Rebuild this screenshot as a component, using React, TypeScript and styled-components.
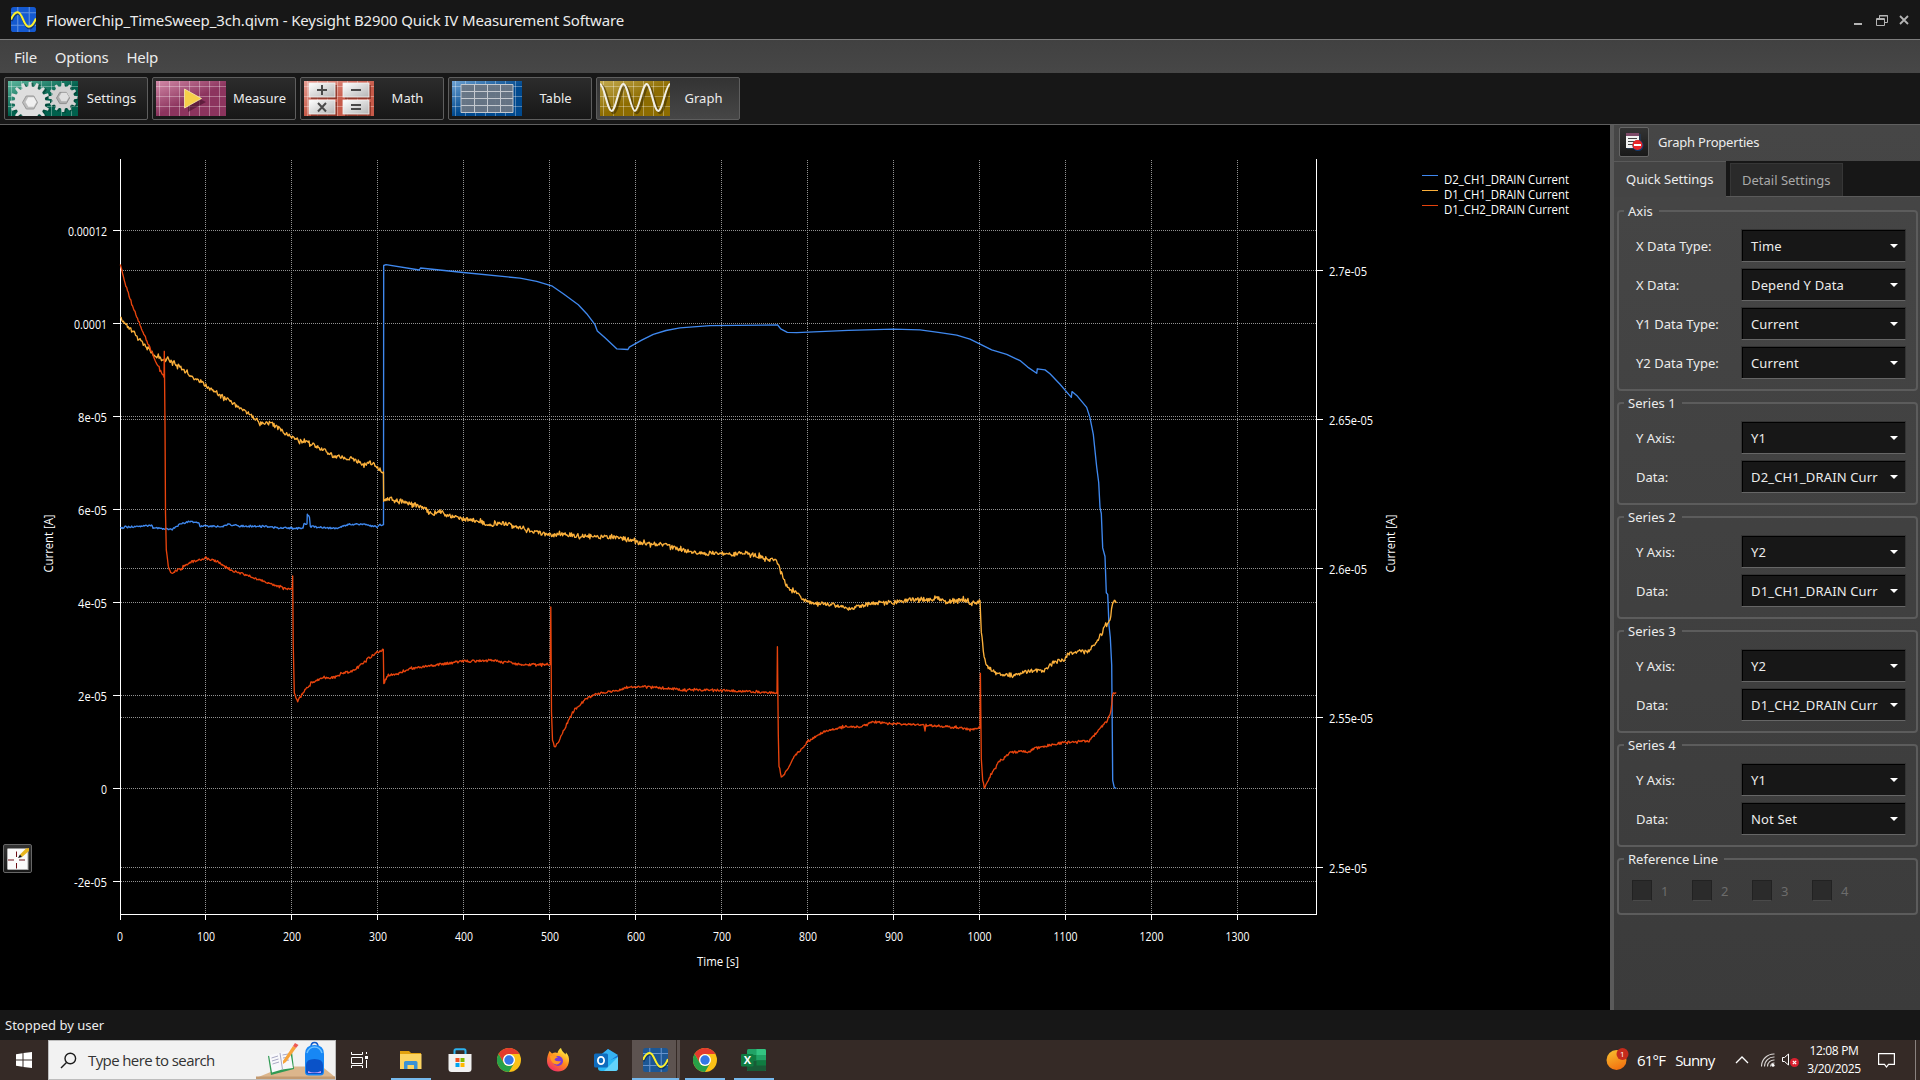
import React from 'react';
import styled, { createGlobalStyle } from 'styled-components';

const TAHOMA = `"Noto Sans", "DejaVu Sans", sans-serif`;
const SEGOE = `"Open Sans", "Noto Sans", sans-serif`;

const GlobalStyle = createGlobalStyle`
  body { margin: 0; background: #000; overflow: hidden; }
  * { box-sizing: border-box; }
`;

const Screen = styled.div`
  width: 1920px;
  height: 1080px;
  display: flex;
  flex-direction: column;
  background: #171717;
  color: #ececec;
  font: 13px ${TAHOMA};
  white-space: nowrap;
`;

/* ---------- window chrome ---------- */

const TitleBar = styled.header`
  height: 40px;
  flex: none;
  display: flex;
  align-items: center;
  padding: 0 8px 0 11px;
  border-bottom: 1px solid #7d7d7d;
`;

const TitleText = styled.div`
  margin-left: 10px;
  flex: 1;
  font-size: 15px;
  letter-spacing: -0.13px;
  padding-top: 1px;
`;

const MenuBar = styled.nav`
  height: 33px;
  flex: none;
  display: flex;
  align-items: center;
  gap: 18px;
  padding: 0 14px;
  background: linear-gradient(#414141, #474747);
  font-size: 15px;
  letter-spacing: -0.3px;
`;

const ToolBar = styled.div`
  height: 52px;
  flex: none;
  display: flex;
  gap: 4px;
  padding: 4px;
  border-bottom: 1px solid #5f5f5f;
`;

const ToolButton = styled.div<{ $active?: boolean }>`
  width: 144px;
  height: 43px;
  display: flex;
  align-items: center;
  padding-left: 3px;
  border: 1px solid #5e5e5e;
  border-radius: 2px;
  background: ${(p) => (p.$active ? 'linear-gradient(#333, #464646)' : 'linear-gradient(#2c2c2c, #171717)')};
  svg { display: block; flex: none; }
  span { flex: 1; text-align: center; padding: 0 2px 1px 0; }
`;

const Workspace = styled.main`
  flex: 1;
  min-height: 0;
  display: flex;
`;

const ChartArea = styled.section`
  position: relative;
  width: 1610px;
  flex: none;
  background: #000;
  svg { display: block; }
`;

const IconButton = styled.div`
  width: 30px;
  height: 30px;
  display: grid;
  place-items: center;
  border: 1px solid #666;
  border-radius: 2px;
  background: linear-gradient(#333, #191919);
`;

const CursorButton = styled(IconButton)`
  position: absolute;
  left: 3px;
  top: 719px;
  width: 29px;
  height: 29px;
`;

const StatusBar = styled.footer`
  height: 30px;
  flex: none;
  padding: 6px 5px 0;
  line-height: 18px;
`;

/* ---------- properties panel ---------- */

const Panel = styled.aside`
  flex: 1;
  border-left: 4px solid #5a5a5a;
  background: linear-gradient(#464646, #3b3b3b);
`;

const PanelHeader = styled.div`
  height: 36px;
  display: flex;
  align-items: center;
  gap: 9px;
  padding: 0 4px 2px 5px;
  letter-spacing: -0.2px;
  span { padding-bottom: 1px; }
`;

const Tabs = styled.div`
  height: 36px;
  display: flex;
  background: linear-gradient(#5a5a5a, #5a5a5a) bottom / 100% 1px no-repeat #171717;
`;

const ActiveTab = styled.div`
  width: 112px;
  padding: 8px 0 0 12px;
  border-top: 1px solid #5a5a5a;
  background: #444;
  line-height: 18px;
`;

const IdleTab = styled.div`
  width: 113px;
  height: 33px;
  margin: 2px 0 0 4px;
  padding: 7px 0 0 11px;
  border: 1px solid #363636;
  border-bottom: 0;
  background: #2a2a2a;
  color: #a9a9a9;
  line-height: 18px;
`;

const Groups = styled.div`
  display: flex;
  flex-direction: column;
  gap: 3px;
  padding: 5px 2px 0 3px;
`;

const Group = styled.fieldset<{ $check?: boolean }>`
  margin: 0;
  min-width: 0;
  padding: ${(p) => (p.$check ? '13px 14px 13px' : '9px 10px 10px 17px')};
  border: 2px solid #5c5c5c;
  border-radius: 4px;
  display: flex;
  flex-direction: ${(p) => (p.$check ? 'row' : 'column')};
  gap: 6px;
`;

const GroupTitle = styled.legend<{ $shift: number }>`
  margin-left: ${(p) => p.$shift}px;
  padding: 0 6px 0 4px;
  height: 18px;
  line-height: 18px;
`;

const Field = styled.div`
  height: 33px;
  display: flex;
  align-items: center;
  justify-content: space-between;
`;

const Combo = styled.div`
  width: 165px;
  height: 33px;
  display: flex;
  align-items: center;
  justify-content: space-between;
  padding: 0 7px 0 9px;
  border: 1px solid #333;
  border-bottom-color: #666;
  box-shadow: inset 1px 1px 0 #000;
  background: #171717;
  letter-spacing: 0.15px;
`;

const Check = styled.div`
  width: 54px;
  height: 19px;
  display: flex;
  align-items: center;
  gap: 9px;
  color: #6c6c6c;
  position: relative;
  left: -1px;
  &::before {
    content: '';
    width: 18px;
    height: 19px;
    background: #2b2b2b;
    border: 1px solid #222;
    border-bottom-color: #4a4a4a;
  }
`;

/* ---------- taskbar ---------- */

const TaskBar = styled.div`
  height: 40px;
  flex: none;
  display: flex;
  background: #352a26;
  color: #fff;
  font-family: ${SEGOE};
`;

const StartCell = styled.div`
  width: 48px;
  display: grid;
  place-items: center;
`;

const SearchBox = styled.div`
  width: 288px;
  display: flex;
  align-items: center;
  padding-left: 11px;
  background: #f2f2f2;
  border: 1px solid #bdbdbd;
  color: #333;
  font-size: 15px;
  letter-spacing: -0.6px;
  span { flex: 1; margin-left: 11px; }
`;

const TaskCell = styled.div<{ $open?: boolean; $active?: boolean; $first?: boolean }>`
  width: ${(p) => (p.$first ? 50 : 49)}px;
  padding-right: ${(p) => (p.$first ? 3 : 0)}px;
  display: flex;
  align-items: center;
  justify-content: center;
  background:
    ${(p) => (p.$open ? `linear-gradient(#76b9ed, #76b9ed) center bottom / ${p.$active ? 47 : 40}px 2px no-repeat,` : '')}
    ${(p) => (p.$active ? 'linear-gradient(90deg, #352a26 1px, transparent 1px, transparent 45px, #352a26 45px, #352a26 46px, transparent 46px), #5d5350' : 'transparent')};
`;

const Tray = styled.div`
  margin-left: auto;
  display: flex;
  align-items: center;
  height: 40px;
`;

const Weather = styled.div`
  width: 86px;
  margin-left: 7px;
  display: flex;
  gap: 10px;
  font-size: 15px;
  letter-spacing: -0.8px;
  padding-bottom: 1px;
`;

const Clock = styled.div`
  width: 64px;
  text-align: center;
  font-size: 12px;
  line-height: 18px;
  letter-spacing: -0.35px;
`;

const Spacer = styled.i<{ $w: number }>`
  width: ${(p) => p.$w}px;
  flex: none;
`;

const ShowDesktop = styled.i`
  width: 5px;
  height: 40px;
  border-left: 1px solid #8a827f;
`;

/* ---------- toolbar artwork ---------- */

const gear = (cx: number, cy: number, r: number, teeth: number) => {
  const pts: string[] = [];
  for (let i = 0; i < teeth; i++) {
    const step = (Math.PI * 2) / teeth;
    [[-0.5, 0.76], [-0.3, 0.78], [-0.16, 1], [0.16, 1], [0.3, 0.78]].forEach(([o, k]) => {
      const a = (i + o) * step;
      pts.push(`${(cx + Math.cos(a) * r * k).toFixed(1)},${(cy + Math.sin(a) * r * k).toFixed(1)}`);
    });
  }
  return pts.join(' ');
};

const hex = (cx: number, cy: number, r: number) =>
  Array.from({ length: 6 }, (_, i) => {
    const a = (i * Math.PI) / 3;
    return `${(cx + Math.cos(a) * r).toFixed(1)},${(cy + Math.sin(a) * r).toFixed(1)}`;
  }).join(' ');

const Tile = ({ id, from, to, children }: { id: string; from: string; to: string; children: React.ReactNode }) => (
  <svg width="70" height="35" viewBox="0 0 70 35">
    <defs>
      <linearGradient id={id} x1="0" y1="0" x2="0.7" y2="0.8">
        <stop offset="0" stopColor={from} />
        <stop offset="0.7" stopColor={to} />
      </linearGradient>
      <linearGradient id={id + 'm'} x1="0" y1="0" x2="1" y2="1">
        <stop offset="0" stopColor="#fff" />
        <stop offset="1" stopColor="#b5b5b5" />
      </linearGradient>
    </defs>
    <rect width="70" height="35" fill={`url(#${id})`} />
    <path
      d="M3.5 0V35M13.5 0V35M23.5 0V35M33.5 0V35M43.5 0V35M53.5 0V35M63.5 0V35M0 5.5H70M0 15.5H70M0 25.5H70"
      stroke="#fff"
      strokeOpacity="0.32"
      fill="none"
    />
    {children}
  </svg>
);

const SettingsArt = () => (
  <Tile id="ts" from="#5fb89f" to="#00604c">
    <polygon points={gear(24, 22, 20, 16)} fill="#003b2e" opacity="0.6" />
    <polygon points={gear(56.5, 18, 14, 12)} fill="#003b2e" opacity="0.6" />
    <polygon points={gear(22, 21, 20, 16)} fill="#dedede" />
    <polygon points={gear(55, 16.5, 14.5, 12)} fill="#d2d2d2" />
    <polygon points={hex(22, 21.5, 7.5)} fill="#bdbdbd" stroke="#999" />
    <polygon points={hex(23, 21, 5.5)} fill="#f0f0f0" />
    <polygon points={hex(55, 17, 6.5)} fill="#aeaeae" stroke="#909090" />
    <polygon points={hex(56, 16, 5)} fill="#e0e0e0" />
  </Tile>
);

const MeasureArt = () => (
  <Tile id="tm" from="#d38aa8" to="#8c345e">
    <path d="M32 12L50 21L32 31Z" fill="#3c0d25" opacity="0.55" />
    <path d="M28.5 8L45.5 17.5L28.5 27Z" fill="#f6d04a" stroke="#f9ecb0" strokeWidth="0.8" />
  </Tile>
);

const MathArt = () => (
  <Tile id="tc" from="#e8a096" to="#c65a49">
    {[[5, 2], [39, 2], [5, 19], [39, 19]].map(([x, y]) => (
      <g key={`${x}-${y}`}>
        <rect x={x + 2} y={y + 2} width="26" height="14" fill="#6b1f14" opacity="0.6" />
        <rect x={x} y={y} width="26" height="14" fill="url(#tcm)" stroke="#f4f4f4" strokeWidth="0.8" />
      </g>
    ))}
    <path d="M13 9H23M18 4V14M47 9H57M14 22L22 30.5M22 22L14 30.5M47 24H57M47 28H57" stroke="#4a4a4a" strokeWidth="2" fill="none" />
  </Tile>
);

const TableArt = () => (
  <Tile id="tt" from="#6fa2d2" to="#00498e">
    <rect x="9" y="3" width="52" height="29" fill="#6a7684" fillOpacity="0.95" />
    <path d="M9 3.5H61V31.5H9ZM9 10.5H61M9 17.5H61M9 24.5H61M22.5 3V32M35.5 3V32M48.5 3V32" stroke="#c3c8cf" fill="none" />
  </Tile>
);

const SINE =
  'M0 3C4 3 7.500 30 11.600 30S19 3 23.300 3S31 30 34.900 30S42.500 3 46.600 3S54 30 58.200 30S66 3 70 3';

const GraphArt = () => (
  <Tile id="tg" from="#c3aa4e" to="#8d6c00">
    <path d={SINE} transform="translate(2 2)" stroke="#3d2e00" strokeOpacity="0.6" strokeWidth="2.400" fill="none" />
    <path d={SINE} stroke="#f1efe6" strokeWidth="2" fill="none" />
  </Tile>
);

const AppLogo = ({ w, h, dim }: { w: number; h: number; dim?: boolean }) => (
  <svg width={w} height={h} viewBox="0 0 24 24" preserveAspectRatio="none">
    <rect width="24" height="24" rx="2.500" fill={dim ? '#1c5795' : '#1459d0'} />
    <path d="M6.500 0V24M17.500 0V24M0 5.500H24M0 17.500H24" stroke="#8fb4ea" strokeOpacity="0.65" fill="none" />
    <path d="M0 12C2 7 4 5 6.500 5C11 5 12 19 17 19C20 19 22 16 24 11" stroke="#0b2550" strokeOpacity="0.7" strokeWidth="2" fill="none" transform="translate(0.500 1.500)" />
    <path d="M0 12C2 7 4 5 6.500 5C11 5 12 19 17 19C20 19 22 16 24 11" stroke="#fdf12c" strokeWidth="2" fill="none" />
  </svg>
);

/* ---------- chart ---------- */

type Pt = [number, number];

const blue: Pt[] = [
  [120.5, 527.5], [151.5, 525.5], [153, 528], [173, 529], [181, 523.5], [190, 521.500], [199, 523], [200, 526], [220, 526.5], [227, 524.5],
  [247, 526.500], [263, 526], [277, 528], [303, 528], [304, 524], [307, 524], [307.3, 514.5], [309.5, 517.5], [310.3, 526.5],
  [336.5, 528.5], [348, 524.5], [361.5, 524], [377, 527], [380, 525], [383.5, 525],
];
const blueSmooth: Pt[] = [
  [383.5, 525], [383.7, 265.5], [386, 264.7], [419.3, 270], [420.5, 268], [463.3, 272.500], [520, 278.2], [536.7, 281.3], [551.7, 285.8],
  [563.3, 293.7], [578.3, 304.7], [586.7, 313.7], [595, 324.7], [597.3, 330.9], [605, 337.8], [616.7, 348.8], [628, 349.5],
  [629.3, 347.1], [641.7, 340.2], [653.3, 334.3], [666, 330.500], [680, 327.8], [710, 325.7], [777.7, 325], [780.7, 328.8], [787.3, 332.3],
  [796.7, 332.7], [848.3, 330.3], [893.3, 329.2], [920, 329.9], [940, 332.7], [956.7, 335.1], [970, 339.2], [991.7, 349.9],
  [1006.7, 354.4], [1020, 360.6], [1027.7, 367.1], [1036.7, 373.3], [1037.3, 368.8], [1045, 369.9], [1050, 373.7], [1060, 384.3],
  [1071.3, 397.4], [1072, 391.6], [1076.7, 395.4], [1086.7, 407.4], [1090, 417.8], [1093.3, 434.3], [1096.7, 467], [1098.7, 482.5],
  [1100, 507.6], [1101.3, 513.5], [1102.7, 547.9], [1105, 556.5], [1106.3, 592.7], [1107.7, 594.4], [1109, 625.4], [1110.3, 637.5],
  [1111.7, 665], [1112.300, 732.2], [1112.7, 780.4], [1114.3, 787.6], [1116.3, 788.3],
];
const amber: Pt[] = [
  [120.3, 316.7], [125, 323.3], [133.3, 331.7], [143.3, 343.3], [155, 356.7], [158.300, 355], [162.3, 362.3], [164.7, 359.3],
  [173.3, 362], [181.7, 369], [193.3, 378.3], [200, 380.7], [206.7, 386.7], [216.7, 392.7], [233.3, 404], [246.7, 412.7],
  [260, 422.3], [271.7, 423.3], [283.3, 431.7], [291.7, 437.7], [306.7, 442.7], [320, 447.7], [333.3, 456], [353.3, 458.7],
  [361.7, 464], [371.7, 462.7], [380, 469.3], [383.4, 472], [383.7, 500], [390, 499], [400, 500.7], [406.7, 502.7], [421.7, 506.7],
  [431.7, 513.3], [440, 511.500], [448.3, 516], [463.3, 519.3], [475, 520.3], [490, 524.8], [505, 523.4], [523.3, 528.2],
  [546.7, 535.1], [566.7, 534.4], [586.7, 536.8], [610, 536.8], [625, 538.5], [640, 543.4], [663.3, 544.4], [680, 549.2],
  [700, 553.7], [720, 553], [733.3, 554.4], [743.3, 552.7], [756.7, 555.4], [768.3, 559.6], [776.7, 559.6], [780.7, 572.6],
  [786.7, 584.7], [796.7, 593.3], [806.7, 602], [826.7, 603.7], [850, 608.4], [870, 603.7], [893.3, 602.3], [910, 599.6],
  [933.3, 599], [946.7, 602], [963.3, 599.9], [973.3, 603.7], [980, 600.500], [981.3, 631.3], [983.3, 651.9], [986.7, 665.7],
  [996.7, 673.3], [1013.3, 675.3], [1026.7, 671.9], [1045, 669.8], [1050, 664], [1065, 658.8], [1068.3, 653.7], [1088.3, 651.3],
  [1095, 644.4], [1101.7, 632.3], [1110, 620.3], [1112.3, 604.8], [1114.3, 601.3], [1116.3, 603],
];
const red: Pt[] = [
  [120.3, 265], [125, 283.3], [131.7, 303.3], [140, 325], [150, 348.3], [158.3, 366.7], [164, 377.3], [164.3, 351.3], [165, 423],
  [165.5, 513], [166.3, 550], [168.3, 566.7], [170.7, 573.3], [180, 569], [190, 562.3], [205.7, 558.3], [218.3, 561.7], [230, 570],
  [243.3, 574], [256.7, 579.3], [266.7, 582.7], [283.3, 588], [292.3, 589.3], [292.7, 576], [293.2, 643], [294.3, 693.3],
  [297.7, 701.3], [303.3, 692.3], [311.7, 682.3], [323.3, 677.7], [335, 677.3], [343.3, 672.7], [355, 670.3], [370, 656.7],
  [383.3, 649.3], [383.8, 683.3], [388.3, 675], [400, 673.3], [408.3, 669.3], [423.3, 666.7], [450, 663], [463.3, 661.1],
  [493.3, 660.5], [523.3, 664.6], [550.3, 664.6], [550.8, 607], [551.5, 712], [552.5, 739.7], [554.3, 747.6], [558.3, 742.1],
  [565, 727.6], [573.3, 711.1], [588.3, 697.3], [600, 693.2], [616.7, 690.8], [626.7, 687.3], [646.7, 686.6], [673.3, 688.7],
  [680, 690], [713.3, 690], [746.7, 691.5], [777, 693.2], [777.4, 646.7], [778.3, 734.6], [779, 765.5], [781.3, 778],
  [786.7, 770.7], [793.3, 757.6], [808.3, 741.4], [823.3, 731.8], [845, 726.6], [860, 727], [873.3, 721.8], [893.3, 723.5],
  [924, 725.3], [925, 731], [926, 725.3], [960, 727.7], [970, 729.4], [980, 728], [980.4, 673.3], [981.3, 758.7], [982.7, 781],
  [984.3, 787.6], [990, 776.9], [998.3, 762.8], [1011.7, 751.8], [1028.3, 751.8], [1036.7, 747.6], [1063.3, 742.5],
  [1088.3, 740.8], [1091.7, 738.4], [1100, 728], [1107.3, 720.8], [1111, 711.5], [1112.7, 694.3], [1116.3, 692.9],
];

const noisy = (pts: Pt[], amp: number, seed: number) => {
  let s = seed;
  const rnd = () => {
    s = (s * 1103515245 + 12345) % 2147483648;
    return s / 2147483648 - 0.5;
  };
  const out: string[] = [];
  for (let i = 0; i < pts.length - 1; i++) {
    const [x0, y0] = pts[i];
    const [x1, y1] = pts[i + 1];
    const n = x1 - x0 < 1.5 ? 1 : Math.round((x1 - x0) * 1.25);
    for (let k = 0; k < n; k++) {
      const t = k / n;
      const burst = rnd() > 0.36 ? 1.7 : 1;
      const d = n === 1 ? 0 : rnd() * amp * burst;
      out.push(`${(x0 + (x1 - x0) * t).toFixed(1)},${(y0 + (y1 - y0) * t + d).toFixed(1)}`);
    }
  }
  out.push(pts[pts.length - 1].join(','));
  return out.join(' ');
};

const gridX = Array.from({ length: 13 }, (_, i) => 205.5 + i * 86);
const leftTicks: [string, number, number][] = [
  ['0.00012', 230.5, 39], ['0.0001', 323.5, 33], ['8e-05', 416.5, 29], ['6e-05', 509.5, 29], ['4e-05', 602.5, 29],
  ['2e-05', 695.5, 29], ['0', 788.5, 6], ['-2e-05', 881.5, 33],
];
const rightTicks: [string, number, number][] = [
  ['2.7e-05', 270.5, 38], ['2.65e-05', 419.5, 44], ['2.6e-05', 568.5, 38], ['2.55e-05', 717.5, 44], ['2.5e-05', 867.5, 38],
];
const legend: [string, string, number][] = [
  ['D2_CH1_DRAIN Current', '#3f88f0', 175.5],
  ['D1_CH1_DRAIN Current', '#fbb03b', 190.5],
  ['D1_CH2_DRAIN Current', '#e5430d', 205.5],
];

const ChartText = styled.text`
  font: 12px ${SEGOE};
  fill: #fff;
`;

const Label = ({ x, y, w, anchor, rotate, children }: { x: number; y: number; w: number; anchor?: 'start' | 'middle' | 'end'; rotate?: boolean; children: string }) => (
  <ChartText
    x={x}
    y={y}
    textAnchor={anchor ?? 'start'}
    textLength={w}
    lengthAdjust="spacingAndGlyphs"
    transform={rotate ? `rotate(-90 ${x} ${y})` : undefined}
  >
    {children}
  </ChartText>
);

const Chart = () => (
  <svg width="1610" height="885" viewBox="0 125 1610 885">
    <g stroke="#929292" strokeDasharray="1 1" fill="none">
      {gridX.map((x) => <path key={x} d={`M${x} 160V914`} />)}
      {[...leftTicks, ...rightTicks].map(([l, y]) => <path key={l} d={`M121 ${y}H1316`} />)}
    </g>
    <path d="M120.500 159V920M120 914.500H1317M1316.500 159V915" stroke="#fff" fill="none" />
    <g stroke="#fff">
      {gridX.map((x) => <path key={x} d={`M${x} 914V920`} />)}
      {leftTicks.map(([l, y]) => <path key={l} d={`M113 ${y}H120`} />)}
      {rightTicks.map(([l, y]) => <path key={l} d={`M1317 ${y}H1323`} />)}
    </g>
    <g fill="none" strokeWidth="1.350" strokeLinejoin="round">
      <polyline points={noisy(blue, 1.6, 7)} stroke="#3f88ee" />
      <polyline points={blueSmooth.map((p) => p.join(',')).join(' ')} stroke="#3f88ee" />
      <polyline points={noisy(amber, 4.2, 21)} stroke="#fbb03b" />
      <polyline points={noisy(red, 2.2, 5)} stroke="#e8440d" />
    </g>
    {leftTicks.map(([l, y, w]) => <Label key={l} x={107} y={y + 5.500} w={w} anchor="end">{l}</Label>)}
    {rightTicks.map(([l, y, w]) => <Label key={l} x={1329} y={y + 5.500} w={w}>{l}</Label>)}
    {Array.from({ length: 14 }, (_, i) => {
      const t = String(i * 100);
      return <Label key={t} x={(t.length > 3 ? 119.5 : 120) + i * 86} y={941} w={t.length * 6} anchor="middle">{t}</Label>;
    })}
    <Label x={718} y={966} w={42} anchor="middle">Time [s]</Label>
    <Label x={53} y={543.5} w={58} anchor="middle" rotate>Current [A]</Label>
    <Label x={1395} y={543.5} w={58} anchor="middle" rotate>Current [A]</Label>
    {legend.map(([l, c, y]) => (
      <g key={l}>
        <path d={`M1422 ${y}H1438`} stroke={c} />
        <Label x={1444} y={y + 8.500} w={125}>{l}</Label>
      </g>
    ))}
  </svg>
);

/* ---------- taskbar artwork ---------- */

const ChromeIcon = () => (
  <svg width="24" height="24" viewBox="0 0 24 24">
    <circle cx="12" cy="12" r="12" fill="#fbc116" />
    <path d="M1.600 6A12 12 0 0 1 22.400 6H12A6 6 0 0 0 6.800 9L6.800 15Z" fill="#e33b2e" />
    <path d="M1.600 6A12 12 0 0 0 12 24L17.200 15A6 6 0 0 1 6.800 15Z" fill="#28a148" />
    <circle cx="12" cy="12" r="6" fill="#fff" />
    <circle cx="12" cy="12" r="4.700" fill="#3577e5" />
  </svg>
);

const ExplorerIcon = () => (
  <svg width="22" height="20" viewBox="0 0 22 20">
    <path d="M0 1H9L11 3H21V8H0Z" fill="#e2a10e" />
    <path d="M0 4H21.500V19H0Z" fill="#fcd462" />
    <path d="M4 19V12.500Q4 11 5.500 11H16Q17.500 11 17.500 12.500V19H14V15H7.500V19Z" fill="#3a92d6" />
  </svg>
);

const StoreIcon = () => (
  <svg width="24" height="24" viewBox="0 0 24 24">
    <path d="M6.500 7V3Q6.500 1.300 8 1.300H16Q17.500 1.300 17.500 3V7" stroke="#2cb1ee" strokeWidth="2" fill="none" />
    <path d="M0.500 6H23.500V21Q23.500 24 20.500 24H3.500Q0.500 24 0.500 21Z" fill="#f1f1f1" />
    <path d="M7.500 10H11.500V14H7.500Z" fill="#f25022" />
    <path d="M12.500 10H16.500V14H12.500Z" fill="#7fba00" />
    <path d="M7.500 15H11.500V19H7.500Z" fill="#00a4ef" />
    <path d="M12.500 15H16.500V19H12.500Z" fill="#ffb900" />
  </svg>
);

const FirefoxIcon = () => (
  <svg width="24" height="24" viewBox="0 0 24 24">
    <defs>
      <linearGradient id="ff" x1="0.8" y1="0" x2="0.2" y2="1">
        <stop offset="0.1" stopColor="#ffe63e" />
        <stop offset="0.5" stopColor="#ff8a1c" />
        <stop offset="1" stopColor="#f0246e" />
      </linearGradient>
    </defs>
    <path d="M3.500 3L6 5.500Q9 4 11.500 5C12 2.500 13.500 1 15 0C15.500 3 18 4.500 19.500 6.500L20 4.500C22.500 7 23.300 10 23 13C22.400 19.500 18 23.500 12 23.500S1 19 1 13C1 9 2 6.500 3.500 3Z" fill="url(#ff)" />
    <circle cx="12" cy="13" r="5" fill="#7a3bd6" />
    <path d="M4 8Q8 6 12 9.500Q9 9.500 8.500 12Q11 14 15 13Q13 17.500 8.500 16Q4.500 14 4 8Z" fill="#ff9b22" />
  </svg>
);

const OutlookIcon = () => (
  <svg width="25" height="24" viewBox="0 0 25 24">
    <path d="M4 9L14 1L24 8V12L4 18Z" fill="#1a6fd0" />
    <path d="M8 6L14 1L24 7L14 14Z" fill="#36b2f2" />
    <path d="M24 9V20Q24 23 21 23H7Q4 23 4 20V17Z" fill="#29b8f5" />
    <path d="M24 9L10 23H21Q24 23 24 20Z" fill="#62d3fb" />
    <rect x="0" y="5.500" width="14" height="14" rx="1.500" fill="#0f6cbd" />
    <ellipse cx="7" cy="12.500" rx="3.100" ry="3.600" stroke="#fff" strokeWidth="1.800" fill="none" />
  </svg>
);

const ExcelLetter = styled.text`
  font: bold 11px ${SEGOE};
  fill: #fff;
`;

const BadgeText = styled.text`
  font: 8px ${SEGOE};
  fill: #fff;
`;

const ExcelIcon = () => (
  <svg width="25" height="23" viewBox="0 0 25 23">
    <rect x="6" y="0" width="19" height="22" rx="1.500" fill="#21a366" />
    <path d="M15.500 0H23.500Q25 0 25 1.500V6H15.500Z" fill="#33c481" />
    <path d="M6 6H15.500V11.500H6Z" fill="#107c41" />
    <path d="M15.500 6H25V11.500H15.500Z" fill="#21a366" />
    <path d="M6 11.500H25V20.500Q25 22 23.500 22H7.500Q6 22 6 20.500Z" fill="#185c37" />
    <path d="M15.500 11.500H25V16.500H15.500Z" fill="#107c41" />
    <rect x="0" y="5" width="12.500" height="12.500" rx="1.200" fill="#107c41" />
    <ExcelLetter x="2.700" y="15.200">X</ExcelLetter>
  </svg>
);

const BackToSchool = () => (
  <svg width="79" height="38" viewBox="0 0 79 38">
    <path d="M0 37L28 25.500H66L79 36V38H0Z" fill="#dcb68c" />
    <path d="M0 35.500H79V38H0Z" fill="#c39a70" />
    <path d="M12 15L15 34L38 28L36 11Z" fill="#2f9a53" />
    <path d="M13 14L16 31.500L26 28.500L37 27L34 9L24 12Z" fill="#f8f8fb" />
    <path d="M24 12L26.500 28.500M15.500 17L22 15M16 20L22.500 18M16.500 23L23 21M26.500 14L32 13M27 17L33 16M27.500 20L33 19" stroke="#a9a9c4" fill="none" />
    <path d="M27 20L37 5L40 7L30 21L27 23Z" fill="#f7a43a" />
    <path d="M37 5L39 2L42.500 4L40 7Z" fill="#ee5a52" />
    <path d="M55 6Q55 1.500 58.500 1.500T62 6" stroke="#1059c9" strokeWidth="1.500" fill="none" />
    <path d="M49 13Q49 4 58.500 4T68 13V31Q68 34.500 64 34.500H53Q49 34.500 49 31Z" fill="#1787f5" />
    <path d="M51 12Q53 6 58.500 6T66 12" stroke="#6cc0ff" strokeWidth="1.500" fill="none" />
    <path d="M50 24Q50 18 58.500 18T67 24V31Q67 33 64.500 33H52.500Q50 33 50 31Z" fill="#0a52c8" />
    <path d="M52 30Q58 33 65 30V32H52Z" fill="#c79af5" />
  </svg>
);

/* ---------- data for the panel ---------- */

const groups: { title: string; fields: [string, string][] }[] = [
  { title: 'Axis', fields: [['X Data Type:', 'Time'], ['X Data:', 'Depend Y Data'], ['Y1 Data Type:', 'Current'], ['Y2 Data Type:', 'Current']] },
  { title: 'Series 1', fields: [['Y Axis:', 'Y1'], ['Data:', 'D2_CH1_DRAIN Curr']] },
  { title: 'Series 2', fields: [['Y Axis:', 'Y2'], ['Data:', 'D1_CH1_DRAIN Curr']] },
  { title: 'Series 3', fields: [['Y Axis:', 'Y2'], ['Data:', 'D1_CH2_DRAIN Curr']] },
  { title: 'Series 4', fields: [['Y Axis:', 'Y1'], ['Data:', 'Not Set']] },
];

const tools = [
  { name: 'Settings', Art: SettingsArt },
  { name: 'Measure', Art: MeasureArt },
  { name: 'Math', Art: MathArt },
  { name: 'Table', Art: TableArt },
  { name: 'Graph', Art: GraphArt },
];

export default function App() {
  return (
    <Screen>
      <GlobalStyle />
      <TitleBar>
        <AppLogo w={25} h={25} />
        <TitleText>FlowerChip_TimeSweep_3ch.qivm - Keysight B2900 Quick IV Measurement Software</TitleText>
        <svg width="64" height="20" viewBox="1848 10 64 20" fill="none" stroke="#b4b4b4">
          <path d="M1854 24H1862" strokeWidth="2" />
          <path d="M1876.500 18.500H1884.500V25.500H1876.500ZM1879.500 18V15.500H1887.500V22.500H1885M1876 19.500H1885M1879 16H1888" />
          <path d="M1900 16L1908 24M1908 16L1900 24" strokeWidth="1.800" />
        </svg>
      </TitleBar>
      <MenuBar>
        <span>File</span>
        <span>Options</span>
        <span>Help</span>
      </MenuBar>
      <ToolBar>
        {tools.map(({ name, Art }) => (
          <ToolButton key={name} $active={name === 'Graph'}>
            <Art />
            <span>{name}</span>
          </ToolButton>
        ))}
      </ToolBar>
      <Workspace>
        <ChartArea>
          <Chart />
          <CursorButton>
            <svg width="22" height="22" viewBox="0 0 22 22">
              <rect x="0.500" y="1" width="21" height="21" fill="#aaa" />
              <rect x="0.500" y="0.500" width="20" height="20.500" fill="#fafafa" />
              <path d="M9.500 3.500V9M9.500 15V20.500M1 12H7M12 12H18" stroke="#6d0d14" fill="none" />
              <path d="M13 6.500L19 0.500L22 0V3L15 9Z" fill="#e9b51d" />
              <path d="M11 10L13 6.500L15 9Z" fill="#111" />
            </svg>
          </CursorButton>
        </ChartArea>
        <Panel>
          <PanelHeader>
            <IconButton>
              <svg width="19" height="19" viewBox="0 0 19 19">
                <rect x="2" y="1" width="14" height="15" fill="#26354a" />
                <rect x="1" y="0" width="13" height="15" fill="#f1f1f1" />
                <rect x="1" y="0" width="13" height="3" fill="#7d4a68" />
                <path d="M3 5.500H12M3 8.500H10M3 11.500H8" stroke="#444" />
                <circle cx="13" cy="12.500" r="5.500" fill="#123a72" />
                <circle cx="12.500" cy="12" r="5" fill="#e8262a" />
                <rect x="9" y="11" width="7" height="2" fill="#fff" />
              </svg>
            </IconButton>
            <span>Graph Properties</span>
          </PanelHeader>
          <Tabs>
            <ActiveTab>Quick Settings</ActiveTab>
            <IdleTab>Detail Settings</IdleTab>
          </Tabs>
          <Groups>
            {groups.map((g) => (
              <Group key={g.title}>
                <GroupTitle $shift={-12}>{g.title}</GroupTitle>
                {g.fields.map(([label, value]) => (
                  <Field key={label}>
                    <span>{label}</span>
                    <Combo>
                      <span>{value}</span>
                      <svg width="8" height="4" viewBox="0 0 8 4"><path d="M0 0H8L4 4Z" fill="#fff" /></svg>
                    </Combo>
                  </Field>
                ))}
              </Group>
            ))}
            <Group $check>
              <GroupTitle $shift={-9}>Reference Line</GroupTitle>
              {['1', '2', '3', '4'].map((n) => <Check key={n}>{n}</Check>)}
            </Group>
          </Groups>
        </Panel>
      </Workspace>
      <StatusBar>Stopped by user</StatusBar>
      <TaskBar>
        <StartCell>
          <svg width="16" height="16" viewBox="0 0 16 16" fill="#fff">
            <path d="M0 2.200L6.500 1.300V7.500H0ZM7.500 1.100L16 0V7.500H7.500ZM0 8.500H6.500V14.700L0 13.800ZM7.500 8.500H16V16L7.500 14.900Z" />
          </svg>
        </StartCell>
        <SearchBox>
          <svg width="17" height="17" viewBox="0 0 17 17" fill="none" stroke="#1c1c1c" strokeWidth="1.400">
            <circle cx="10.300" cy="6.500" r="5.300" />
            <path d="M6.500 10.500L1 16" />
          </svg>
          <span>Type here to search</span>
          <BackToSchool />
        </SearchBox>
        <TaskCell $first>
          <svg width="17" height="16" viewBox="0 0 17 16" fill="none" stroke="#fff">
            <path d="M0.500 0V2.500H11.500V0M0.500 5.500H11.500V11.500H0.500ZM0.500 16V13.500H11.500V16M15.500 0V2M15.500 8V16" />
            <rect x="14" y="4" width="3" height="3" fill="#fff" stroke="none" />
          </svg>
        </TaskCell>
        <TaskCell $open><ExplorerIcon /></TaskCell>
        <TaskCell><StoreIcon /></TaskCell>
        <TaskCell><ChromeIcon /></TaskCell>
        <TaskCell><FirefoxIcon /></TaskCell>
        <TaskCell><OutlookIcon /></TaskCell>
        <TaskCell $open $active><AppLogo w={25} h={24} dim /></TaskCell>
        <TaskCell $open><ChromeIcon /></TaskCell>
        <TaskCell $open><ExcelIcon /></TaskCell>
        <Tray>
          <svg width="24" height="24" viewBox="0 0 24 24">
            <defs>
              <linearGradient id="sun" x1="0.2" y1="0" x2="0.6" y2="1">
                <stop offset="0" stopColor="#f8bd2e" />
                <stop offset="1" stopColor="#f2700f" />
              </linearGradient>
            </defs>
            <circle cx="10.500" cy="12" r="10" fill="url(#sun)" />
            <circle cx="16.500" cy="6" r="6" fill="#c42b1c" />
            <BadgeText x="16.300" y="9" textAnchor="middle">1</BadgeText>
          </svg>
          <Weather>
            <span>61°F</span>
            <span>Sunny</span>
          </Weather>
          <Spacer $w={12} />
          <svg width="14" height="9" viewBox="0 0 14 9" fill="none" stroke="#fff" strokeWidth="1.300">
            <path d="M1 7L7 1L13 7" />
          </svg>
          <Spacer $w={12} />
          <svg width="14" height="14" viewBox="0 0 14 14" fill="none" stroke="#d9d6d4" strokeWidth="1.100">
            <path d="M0.500 13.500A12.500 12.500 0 0 1 13.500 1M3.500 13.500A9.500 9.500 0 0 1 13.500 4M6.500 13.500A6.500 6.500 0 0 1 13.500 7M9.500 13.500A4 4 0 0 1 13.500 10" />
            <circle cx="12" cy="12.300" r="1.500" fill="#fff" stroke="none" />
          </svg>
          <Spacer $w={7} />
          <svg width="18" height="16" viewBox="0 0 18 16" fill="none" stroke="#fff">
            <path d="M0.500 5.500H2.500L6.500 2V13L2.500 9.500H0.500Z" />
            <circle cx="12.500" cy="10.500" r="4.500" fill="#d9202f" stroke="none" />
            <path d="M10.800 8.800L14.200 12.200M14.200 8.800L10.800 12.200" strokeWidth="1.200" />
          </svg>
          <Spacer $w={2} />
          <Clock>12:08 PM<br />3/20/2025</Clock>
          <Spacer $w={12} />
          <svg width="17" height="17" viewBox="0 0 17 17" fill="none" stroke="#fff" strokeWidth="1.200">
            <path d="M0.600 1.600H16.400V12.400H10.500L8.500 15L6.500 12.400H0.600Z" />
          </svg>
          <Spacer $w={20} />
          <ShowDesktop />
        </Tray>
      </TaskBar>
    </Screen>
  );
}
